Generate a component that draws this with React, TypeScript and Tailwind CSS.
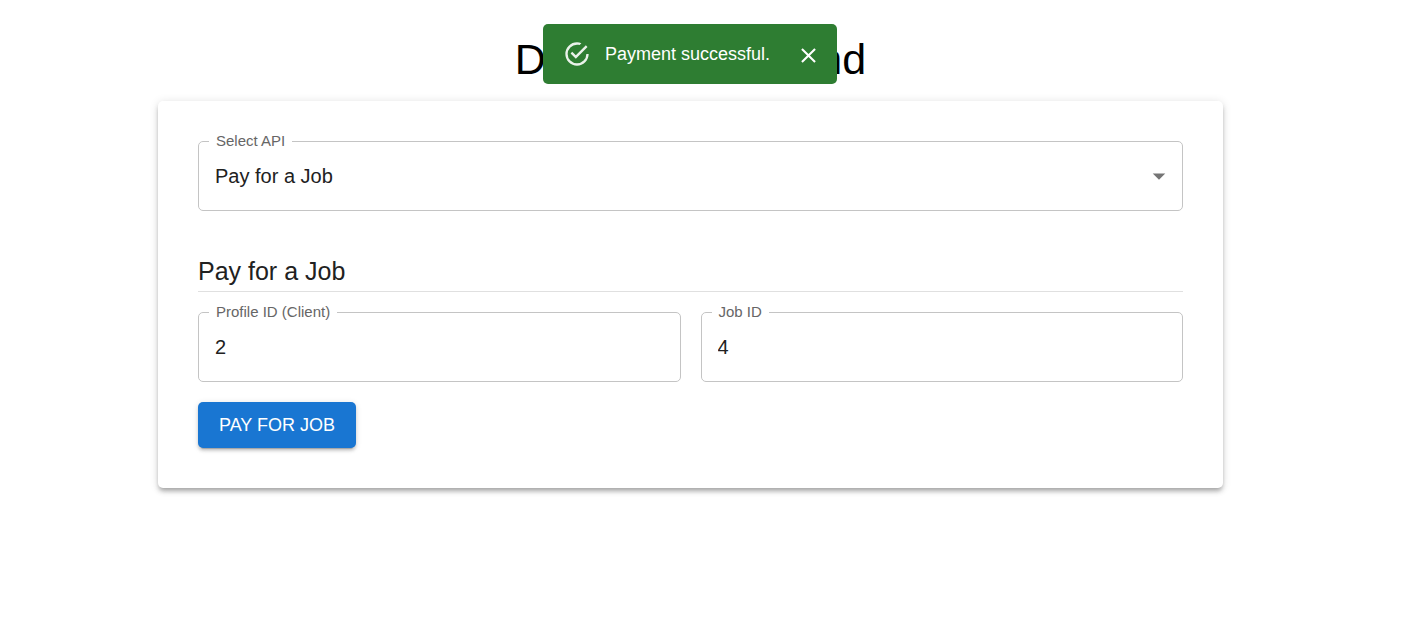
import { useId, useState, type ReactNode } from "react";

function OutlinedField({ id, label, children }: { id: string; label: string; children: ReactNode }) {
  return (
    <fieldset className="min-w-0 rounded-[5px] border border-[#c4c4c4] pb-[10px] focus-within:border-[#1976d2]">
      <legend className="ml-[10px] px-[7px] pb-[2px] text-[15px] leading-[19px] text-[#666666]">
        <label htmlFor={id}>{label}</label>
      </legend>
      {children}
    </fieldset>
  );
}

function TextField({ label, initialValue }: { label: string; initialValue: string }) {
  const id = useId();
  const [value, setValue] = useState(initialValue);
  return (
    <OutlinedField id={id} label={label}>
      <input
        id={id}
        type="text"
        inputMode="numeric"
        value={value}
        onChange={(e) => setValue(e.target.value)}
        className="block h-12 w-full bg-transparent px-4 text-xl text-[#212121] outline-none"
      />
    </OutlinedField>
  );
}

function ApiSelect() {
  const id = useId();
  return (
    <OutlinedField id={id} label="Select API">
      <div className="grid items-center">
        <select
          id={id}
          className="col-start-1 row-start-1 h-12 w-full appearance-none bg-transparent px-4 text-xl text-[#212121] outline-none"
        >
          <option>Pay for a Job</option>
        </select>
        <svg
          viewBox="0 0 24 24"
          aria-hidden="true"
          className="pointer-events-none col-start-1 row-start-1 mr-2 size-[30px] justify-self-end fill-[#757575]"
        >
          <path d="M7 10l5 5 5-5z" />
        </svg>
      </div>
    </OutlinedField>
  );
}

function Toast({ message, onClose }: { message: string; onClose: () => void }) {
  return (
    <div className="pointer-events-none absolute inset-x-0 top-6 flex justify-center pr-6">
      <div
        role="alert"
        className="pointer-events-auto flex h-[60px] items-center rounded-[5px] bg-[#2e7d32] pr-4 pl-5 text-white"
      >
        <svg viewBox="0 0 24 24" aria-hidden="true" className="size-7 fill-white opacity-90">
          <path d="M20,12A8,8 0 0,1 12,20A8,8 0 0,1 4,12A8,8 0 0,1 12,4C12.76,4 13.5,4.11 14.2,4.31L15.77,2.74C14.61,2.26 13.34,2 12,2A10,10 0 0,0 2,12A10,10 0 0,0 12,22A10,10 0 0,0 22,12M7.91,10.08L6.5,11.5L11,16L21,6L19.59,4.58L11,13.17L7.91,10.08Z" />
        </svg>
        <p className="ml-[14px] text-lg">{message}</p>
        <button type="button" aria-label="Close" onClick={onClose} className="mt-[3px] ml-[26px] cursor-pointer">
          <svg viewBox="0 0 24 24" aria-hidden="true" className="size-[25px] fill-white">
            <path d="M19 6.41L17.59 5 12 10.59 6.41 5 5 6.41 10.59 12 5 17.59 6.41 19 12 13.41 17.59 19 19 17.59 13.41 12z" />
          </svg>
        </button>
      </div>
    </div>
  );
}

export default function App() {
  const [toastOpen, setToastOpen] = useState(true);
  return (
    <div className="relative min-h-screen bg-white pt-[33px] pr-[23px] pb-10 font-['Liberation_Sans',Arial,sans-serif]">
      <main className="mx-auto w-full max-w-[1065px]">
        <h1 className="text-center text-[43px] leading-[52px] text-black">Deel API Frontend</h1>
        <section className="mt-4 rounded-[5px] bg-white px-10 pt-[30px] pb-10 shadow-[0_4px_4px_-2px_rgba(0,0,0,0.2),0_4px_5px_0_rgba(0,0,0,0.14),0_1px_10px_0_rgba(0,0,0,0.12)]">
          <ApiSelect />
          <h2 className="mt-10 border-b border-[#e0e0e0] text-[25px] leading-10 text-[#212121]">Pay for a Job</h2>
          <form className="mt-[10px]" onSubmit={(e) => { e.preventDefault(); setToastOpen(true); }}>
            <div className="grid grid-cols-2 gap-5">
              <TextField label="Profile ID (Client)" initialValue="2" />
              <TextField label="Job ID" initialValue="4" />
            </div>
            <button
              type="submit"
              className="mt-5 h-[46px] cursor-pointer rounded-[5px] bg-[#1976d2] px-[21px] text-lg text-white uppercase shadow-[0_4px_1px_-3px_rgba(0,0,0,0.2),0_3px_3px_0_rgba(0,0,0,0.14),0_1px_6px_0_rgba(0,0,0,0.12)]"
            >
              Pay for Job
            </button>
          </form>
        </section>
      </main>
      {toastOpen && <Toast message="Payment successful." onClose={() => setToastOpen(false)} />}
    </div>
  );
}
